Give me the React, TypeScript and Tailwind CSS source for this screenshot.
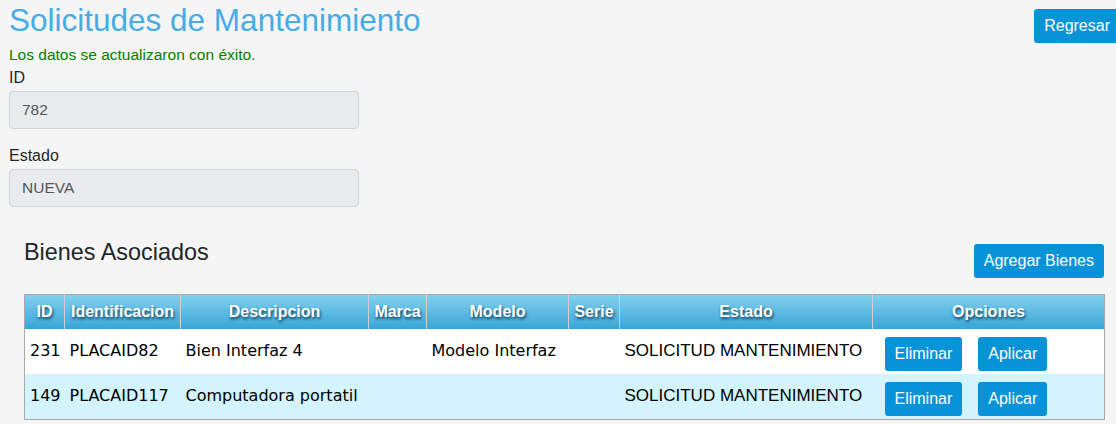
import React from 'react';

type Bien = {
  id: string;
  identificacion: string;
  descripcion: string;
  marca: string;
  modelo: string;
  serie: string;
  estado: string;
};

const COLUMNS: { label: string; width: number }[] = [
  { label: 'ID', width: 40 },
  { label: 'Identificacion', width: 116 },
  { label: 'Descripcion', width: 188 },
  { label: 'Marca', width: 58 },
  { label: 'Modelo', width: 142 },
  { label: 'Serie', width: 51 },
  { label: 'Estado', width: 253 },
  { label: 'Opciones', width: 232 },
];

const BIENES: Bien[] = [
  {
    id: '231',
    identificacion: 'PLACAID82',
    descripcion: 'Bien Interfaz 4',
    marca: '',
    modelo: 'Modelo Interfaz',
    serie: '',
    estado: 'SOLICITUD MANTENIMIENTO',
  },
  {
    id: '149',
    identificacion: 'PLACAID117',
    descripcion: 'Computadora portatil',
    marca: '',
    modelo: '',
    serie: '',
    estado: 'SOLICITUD MANTENIMIENTO',
  },
];

const btn =
  'flex h-[34px] items-center rounded-[3px] bg-[#0892d8] px-[10px] text-[16px] text-white';

function Field({ label, value, className = '' }: { label: string; value: string; className?: string }) {
  return (
    <div className={className}>
      <div className="h-[24px] text-[16px] leading-[24px] text-[#212529]">{label}</div>
      <div className="mt-[1px] flex h-[38px] w-[350px] items-center rounded-[4px] border border-[#ced4da] bg-[#e9ecef] pl-[12px] text-[15.5px] text-[#555]">
        {value}
      </div>
    </div>
  );
}

export default function App() {
  return (
    <div
      className="h-[424px] w-[1116px] overflow-hidden bg-[#f5f5f5]"
      style={{ fontFamily: '"Liberation Sans", Arial, sans-serif' }}
    >
      {/* Header */}
      <div className="flex items-start justify-between pl-[9px]">
        <div>
          <h1 className="h-[40px] text-[31.5px] leading-[40px] text-[#45ace6]">
            Solicitudes de Mantenimiento
          </h1>
          <p className="mt-[5px] text-[15.5px] leading-[20px] text-[#008000]">
            Los datos se actualizaron con éxito.
          </p>
          <Field label="ID" value="782" className="mt-[1px]" />
          <Field label="Estado" value="NUEVA" className="mt-[15px]" />
        </div>
        <button className={`${btn} -mr-[4px] mt-[9px]`}>Regresar</button>
      </div>

      {/* Bienes */}
      <div className="ml-[24px] mt-[32px] w-[1080px]">
        <div className="flex items-start justify-between">
          <h2 className="text-[23.4px] leading-[26px] text-[#212529]">Bienes Asociados</h2>
          <button className={`${btn} mt-[5px]`}>Agregar Bienes</button>
        </div>

        <table className="mt-[16px] w-[1080px] table-fixed border-collapse border border-[#a9a9a9]">
          <colgroup>
            {COLUMNS.map((c) => (
              <col key={c.label} style={{ width: c.width }} />
            ))}
          </colgroup>
          <thead>
            <tr className="bg-gradient-to-b from-[#80d1ef] to-[#37a5d6]">
              {COLUMNS.map((c, i) => (
                <th
                  key={c.label}
                  className={`h-[34px] p-0 text-center text-[16px] font-bold text-white [text-shadow:1px_2px_3px_#0b3a55] ${
                    i > 0 ? 'border-l border-[#cfcfcf]' : ''
                  }`}
                >
                  {c.label}
                </th>
              ))}
            </tr>
          </thead>
          <tbody>
            {BIENES.map((b, i) => (
              <tr key={b.id} className={i % 2 === 0 ? 'bg-white' : 'bg-[#d3f4fc]'}>
                {[b.id, b.identificacion, b.descripcion, b.marca, b.modelo, b.serie].map((v, j) => (
                  <td
                    key={j}
                    className="h-[45px] overflow-visible whitespace-nowrap pl-[5px] pr-0 align-middle text-[16px] text-black"
                    style={{ fontFamily: '"DejaVu Sans", Verdana, sans-serif' }}
                  >
                    {v}
                  </td>
                ))}
                <td className="h-[45px] whitespace-nowrap pl-[5px] pr-0 align-middle text-[17px] text-black">
                  {b.estado}
                </td>
                <td className="h-[45px] px-[12px] pb-[3px] pt-[8px] align-top">
                  <div className="flex gap-[16px]">
                    <button className={btn}>Eliminar</button>
                    <button className={btn}>Aplicar</button>
                  </div>
                </td>
              </tr>
            ))}
          </tbody>
        </table>
      </div>
    </div>
  );
}
